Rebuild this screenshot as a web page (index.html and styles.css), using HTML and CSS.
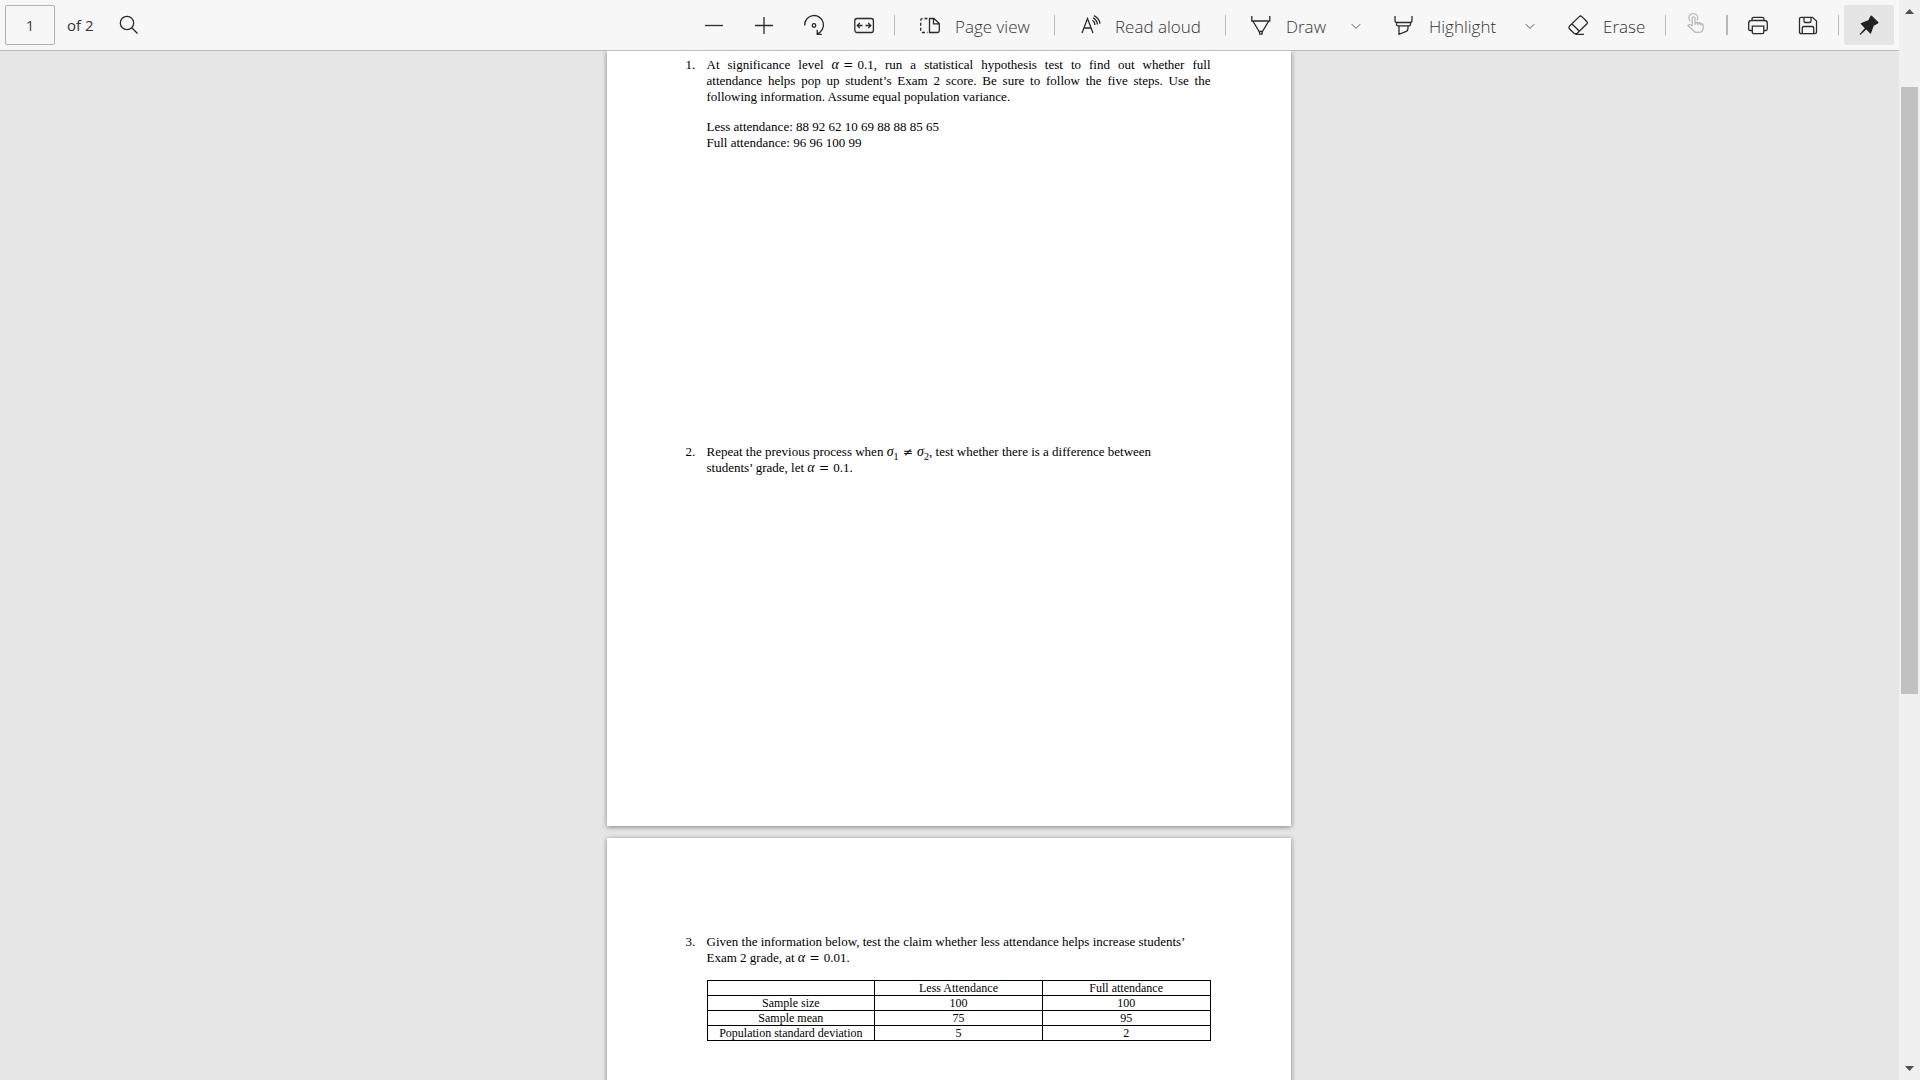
FILE: index.html
```html
<!DOCTYPE html>
<html lang="en">
<head>
    <meta charset="UTF-8">
    <meta name="viewport" content="width=device-width, initial-scale=1.0">
    <title>PDF viewer</title>
    <link rel="stylesheet" href="styles.css">
</head>
<body>

    <div class="viewer">
        <header class="toolbar">
            <div class="page-nav">
                <input class="page-input" id="pageNumber" type="text" value="1">
                <label for="pageNumber">of 2</label>
                <button class="icon-button" aria-label="Search">
                    <svg class="icon" viewBox="0 0 20 20"><circle cx="8" cy="8" r="6.7"/><path d="M12.8 12.8L18.5 18.5"/></svg>
                </button>
            </div>

            <div class="tools">
                <button class="icon-button" aria-label="Zoom out">
                    <svg class="icon" viewBox="0 0 20 20"><path d="M1 10.5H19"/></svg>
                </button>
                <button class="icon-button" aria-label="Zoom in">
                    <svg class="icon" viewBox="0 0 20 20"><path d="M1 10.5H19M10 2V19"/></svg>
                </button>
                <button class="icon-button" aria-label="Rotate">
                    <svg class="icon" viewBox="0 0 20 20"><path d="M.7 10.5A9.4 9.4 0 1 1 13.2 18.8M13.2 14.8V19.3H17.8"/><circle cx="10" cy="10.5" r="1.8"/></svg>
                </button>
                <button class="icon-button" aria-label="Fit to width">
                    <svg class="icon" viewBox="0 0 20 20"><rect x=".8" y="3.5" width="18.6" height="14" rx="2.2"/><path d="M8.5 10.5H3.5M5.8 8L3.3 10.5L5.8 13M11.5 10.5H16.7M14.3 8L16.8 10.5L14.3 13"/></svg>
                </button>
                <span class="divider"></span>
                <button class="text-button page-view">
                    <svg class="icon" viewBox="0 0 20 20"><path d="M9.5 3.5H14L19.3 8.5V15.7A1.8 1.8 0 0 1 17.5 17.5H9.5ZM13.5 3.7V8.8H19"/><path stroke-dasharray="3 2" d="M7.5 3.5H2.4A1.8 1.8 0 0 0 .7 5.3V15.7A1.8 1.8 0 0 0 2.4 17.5H7.5"/></svg>
                    <span>Page view</span>
                </button>
                <span class="divider"></span>
                <button class="text-button read-aloud">
                    <svg class="icon" viewBox="0 0 20 20"><path d="M2 18L7.5 3.5L13 18M4 13H11M12.5 5.2Q14.8 6.5 15 10M13 2.8Q17 4.8 17.5 9.5M14 .7Q19.5 3.5 20 8.8"/></svg>
                    <span>Read aloud</span>
                </button>
                <span class="divider"></span>
                <button class="text-button draw">
                    <svg class="icon" viewBox="0 0 20 20"><path d="M.8 1V6H18.8V1M1.8 6L8.2 16.5H11.4L17.8 6M8.2 16.5L8.7 19.2H11L11.4 16.5"/></svg>
                    <span>Draw</span>
                </button>
                <button class="menu-button" aria-label="Draw options">
                    <svg class="chevron" viewBox="0 0 10 10"><path d="M.8 4.2L5 8.4L9.2 4.2"/></svg>
                </button>
                <button class="text-button highlight">
                    <svg class="icon" viewBox="0 0 20 20"><path d="M1 1V5.5Q1 7.5 3 7.5H16Q18 7.5 18 5.5V1M2.5 7.5V9.2Q2.5 10.8 4 10.8H15Q16.5 10.8 16.5 9.2V7.5M5 10.8V19.3L12.2 16.3Q14 15.5 14 13.5V10.8"/></svg>
                    <span>Highlight</span>
                </button>
                <button class="menu-button" aria-label="Highlight options">
                    <svg class="chevron" viewBox="0 0 10 10"><path d="M.8 4.2L5 8.4L9.2 4.2"/></svg>
                </button>
                <button class="text-button erase">
                    <svg class="icon" viewBox="0 0 20 20"><path d="M11.5 1.4Q12.6.6 13.6 1.4L19 6.7Q19.8 7.8 19 8.8L9.4 18Q7.5 19.5 5.7 18L1.4 13.8Q.3 12.5 1.4 11.2ZM4 9L11.5 16.2M7.5 19.3H16"/></svg>
                    <span>Erase</span>
                </button>
                <span class="divider"></span>
                <button class="icon-button" aria-label="Touch" disabled>
                    <svg class="icon" viewBox="0 0 20 20"><path d="M6.2 11V3.3Q6.2 1.8 7.6 1.8Q9 1.8 9 3.3V7.2L15.3 8.5Q17.2 9 17.2 11V13Q16.8 17.3 13 17.3H10.5Q9 17.3 8 16.2L2 10.6Q3.4 8.5 6.2 11M9 7V10M11.8 8V10.5M14.5 8.5V10.5M4.3 6.2A4.4 4.4 0 1 1 11 5.5"/></svg>
                </button>
                <span class="divider thick"></span>
                <button class="icon-button" aria-label="Print">
                    <svg class="icon" viewBox="0 0 20 20"><path d="M4.3 15.5H2.2Q.7 15.5.7 14V8.2Q.7 5.5 3.4 5.5H16.6Q19.3 5.5 19.3 8.2V14Q19.3 15.5 17.8 15.5H15.8M4 5.3V4Q4 2.3 5.7 2.3H14.3Q16 2.3 16 4V5.3M4.3 11.2H15.8V17.3Q15.8 18.7 14.3 18.7H5.8Q4.3 18.7 4.3 17.3Z"/></svg>
                </button>
                <button class="icon-button" aria-label="Save">
                    <svg class="icon" viewBox="0 0 20 20"><path d="M3.2 2.3H14.5L18.5 6V16.9Q18.5 18.7 16.7 18.7H3.2Q1.5 18.7 1.5 16.9V4Q1.5 2.3 3.2 2.3ZM6 2.3V6.2Q6 7.5 7.3 7.5H11.7Q13 7.5 13 6.2V2.3M4.3 18.7V13Q4.3 11.5 5.8 11.5H14.2Q15.7 11.5 15.7 13V18.7"/></svg>
                </button>
                <span class="divider"></span>
                <button class="icon-button pinned" aria-label="Unpin toolbar">
                    <svg class="icon" viewBox="0 0 20 20"><path class="solid" d="M11.6.8Q12.4.3 13.1 1L19.2 7Q19.9 7.8 19 8.4L14.8 10.8Q13.2 14.8 11.8 19L7.2 14.6L1.2 20L.5 19.2L5.8 13.2L1.4 8.5Q5.2 6.6 9.4 5.3Z"/></svg>
                </button>
            </div>
        </header>

        <main class="pages">
            <section class="page first">
                <div class="question long-answer">
                    <span class="number">1.</span>
                    <div>
                        <p class="justified">At significance level <span class="math"><i>α</i> <b>=</b> 0.1</span>, run a statistical hypothesis test to find out whether full<br>attendance helps pop up student’s Exam 2 score. Be sure to follow the five steps. Use the</p>
                        <p>following information. Assume equal population variance.</p>
                        <p>Less attendance: 88 92 62 10 69 88 88 85 65<br>Full attendance: 96 96 100 99</p>
                    </div>
                </div>
                <div class="question">
                    <span class="number">2.</span>
                    <p>Repeat the previous process when <span class="math"><i>σ</i><sub>1</sub> <b>≠</b> <i>σ</i><sub>2</sub></span>, test whether there is a difference between<br>students’ grade, let <span class="math"><i>α</i> <b>=</b> 0.1</span>.</p>
                </div>
            </section>

            <section class="page second">
                <div class="question">
                    <span class="number">3.</span>
                    <div>
                        <p>Given the information below, test the claim whether less attendance helps increase students’<br>Exam 2 grade, at <span class="math"><i>α</i> <b>=</b> 0.01</span>.</p>
                        <table>
                            <tr><td></td><th scope="col">Less Attendance</th><th scope="col">Full attendance</th></tr>
                            <tr><th scope="row">Sample size</th><td>100</td><td>100</td></tr>
                            <tr><th scope="row">Sample mean</th><td>75</td><td>95</td></tr>
                            <tr><th scope="row">Population standard deviation</th><td>5</td><td>2</td></tr>
                        </table>
                    </div>
                </div>
            </section>
        </main>
    </div>

    <div class="scrollbar">
        <svg class="arrow" viewBox="0 0 9 5"><path d="M0 5L4.5 0L9 5Z"/></svg>
        <div class="track">
            <div class="thumb"></div>
        </div>
        <svg class="arrow" viewBox="0 0 9 5"><path d="M0 0L4.5 5L9 0Z"/></svg>
    </div>

</body>
</html>
```
FILE: styles.css
```css
* {
    box-sizing: border-box;
}
body {
    margin: 0;
    display: flex;
    height: 100vh;
    overflow: hidden;
    background-color: #e6e6e6;
    font-family: 'Open Sans', 'Noto Sans', sans-serif;
}
.viewer {
    flex: 1;
    min-width: 0;
    display: flex;
    flex-direction: column;
}

/* toolbar */
.toolbar {
    display: flex;
    justify-content: space-between;
    flex-shrink: 0;
    padding: 5px;
    background-color: #f7f7f7;
    border-bottom: 1px solid #bbb;
    color: #333;
}
.page-nav, .tools {
    display: flex;
    align-items: center;
}
.page-input {
    width: 50px;
    height: 40px;
    margin-right: 12px;
    padding: 0;
    border: 1px solid #b0b0b0;
    border-radius: 2px;
    background-color: #f7f7f7;
    color: #444;
    font-family: inherit;
    font-size: 15px;
    text-align: center;
}
.page-nav label {
    width: 37px;
    font-size: 15px;
    white-space: nowrap;
}
button {
    display: flex;
    align-items: center;
    height: 40px;
    padding: 0;
    border: none;
    border-radius: 2px;
    background: none;
    color: inherit;
    font-family: inherit;
    font-size: 17px;
    font-weight: 300;
    white-space: nowrap;
}
.icon-button {
    width: 50px;
    justify-content: center;
}
.icon-button:disabled .icon {
    stroke: #b8b8b8;
}
.text-button {
    gap: 15px;
    padding-left: 20px;
}
.text-button span {
    padding-top: 2px;
}
.page-view {
    width: 149px;
}
.read-aloud {
    width: 160px;
}
.draw {
    width: 107px;
}
.highlight {
    width: 138px;
}
.erase {
    width: 112px;
}
.menu-button {
    width: 36px;
    justify-content: center;
}
.pinned {
    background-color: #e5e5e5;
}
.icon {
    width: 20px;
    height: 20px;
    flex-shrink: 0;
    overflow: visible;
    fill: none;
    stroke: #2b2b2b;
    stroke-width: 1.3;
}
.icon .solid {
    fill: #222;
    stroke: none;
}
.chevron {
    width: 10px;
    height: 10px;
    fill: none;
    stroke: #555;
}
.divider {
    width: 1px;
    height: 20px;
    margin: 0 5px;
    background-color: #b8b8b8;
}
.divider.thick {
    width: 2px;
}

/* document */
.pages {
    flex: 1;
    display: flex;
    flex-direction: column;
    align-items: center;
    gap: 12px;
    padding-right: 2px;
    overflow: hidden;
}
.page {
    flex-shrink: 0;
    width: 684px;
    padding: 0 80px 0 79px;
    background-color: #fff;
    box-shadow: 0 1px 5px rgba(0, 0, 0, 0.45);
    color: #000;
    font-family: 'Liberation Serif', serif;
    font-size: 13px;
    line-height: 16px;
}
.first {
    padding-top: 6px;
    padding-bottom: 336px;
}
.second {
    padding-top: 96px;
    padding-bottom: 120px;
}
.question {
    display: grid;
    grid-template-columns: 21px 1fr;
}
.question p {
    margin: 0 0 14px;
    white-space: nowrap;
}
.question .justified {
    margin: 0;
    text-align: justify;
    text-align-last: justify;
    white-space: normal;
}
.long-answer {
    min-height: 387px;
}
.math {
    display: inline-block;
    text-align: left;
    text-align-last: left;
}
.math i {
    font-size: 14px;
    line-height: 1;
}
.math b {
    margin: 0 1px;
    font-family: 'DejaVu Serif', serif;
    font-size: 12px;
    font-weight: normal;
    line-height: 1;
}
.math sub {
    font-size: 10px;
    line-height: 0;
}
table {
    width: 100%;
    border-collapse: collapse;
    table-layout: fixed;
    font-size: 12px;
    line-height: 14px;
    text-align: center;
}
th, td {
    height: 15px;
    padding: 0;
    border: 1px solid #000;
    font-weight: normal;
}

/* scrollbar */
.scrollbar {
    display: flex;
    flex-direction: column;
    align-items: center;
    width: 21px;
    padding: 9px 0;
    background-color: #f0f0f0;
}
.arrow {
    width: 9px;
    height: 5px;
    fill: #505050;
}
.track {
    flex: 1;
    width: 17px;
    padding-top: 73px;
}
.thumb {
    height: 62%;
    background-color: #c1c1c1;
}
```
